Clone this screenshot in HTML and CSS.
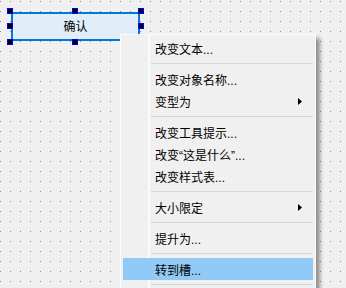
FILE: index.html
```html
<!DOCTYPE html>
<html lang="zh">
<head>
<meta charset="utf-8">
<link rel="stylesheet" href="styles.css">
</head>
<body>
<div class="canvas">
  <div class="widget">确认</div>
  <span class="handle h-tl"></span>
  <span class="handle h-tm"></span>
  <span class="handle h-tr"></span>
  <span class="handle h-ml"></span>
  <span class="handle h-mr"></span>
  <span class="handle h-bl"></span>
  <span class="handle h-bm"></span>
  <span class="handle h-br"></span>

  <div class="menu">
    <div class="item">改变文本...</div>
    <div class="sep"></div>
    <div class="item">改变对象名称...</div>
    <div class="item sub">变型为<svg class="arrow" width="4" height="7" viewBox="0 0 4 7"><path d="M0 0L4 3.5L0 7Z"/></svg></div>
    <div class="sep"></div>
    <div class="item">改变工具提示...</div>
    <div class="item">改变“这是什么”...</div>
    <div class="item">改变样式表...</div>
    <div class="sep"></div>
    <div class="item sub">大小限定<svg class="arrow" width="4" height="7" viewBox="0 0 4 7"><path d="M0 0L4 3.5L0 7Z"/></svg></div>
    <div class="sep"></div>
    <div class="item">提升为...</div>
    <div class="sep"></div>
    <div class="item active">转到槽...</div>
    <div class="sep"></div>
  </div>
</div>
</body>
</html>
```
FILE: styles.css
```css
html, body {
  margin: 0;
  padding: 0;
}
body {
  width: 346px;
  height: 288px;
  overflow: hidden;
  background-color: #f0f0f0;
  font-family: "Liberation Sans", "Noto Sans CJK SC", sans-serif;
  font-size: 12px;
  color: #000;
}
.canvas {
  position: relative;
  width: 346px;
  height: 288px;
  background-color: #f0f0f0;
  background-image: conic-gradient(from 0deg at 1px 1px, transparent 75%, #8c8c8c 0);
  background-size: 10px 10px;
  background-position: 0 1px;
}
.widget {
  position: absolute;
  left: 11px;
  top: 12px;
  width: 129px;
  height: 29px;
  box-sizing: border-box;
  border: 2px solid #0078d7;
  background: #e1eefa;
  display: flex;
  align-items: center;
  justify-content: center;
  line-height: 1;
}
.handle {
  position: absolute;
  width: 6px;
  height: 6px;
  box-sizing: border-box;
  border: 1px solid #0000f0;
  background: #000;
}
.h-tl { left: 7px; top: 8px; }
.h-tm { left: 72px; top: 8px; }
.h-tr { left: 138px; top: 8px; }
.h-ml { left: 7px; top: 23px; }
.h-mr { left: 138px; top: 23px; }
.h-bl { left: 7px; top: 39px; }
.h-bm { left: 72px; top: 39px; }
.h-br { left: 138px; top: 39px; }

.menu {
  position: absolute;
  left: 120px;
  top: 34px;
  width: 196px;
  box-sizing: border-box;
  border: 1px solid #fbfbfb;
  padding: 2px;
  background: linear-gradient(to right, #f0f0f0 27px, #fbfbfb 27px, #fbfbfb 29px, #f0f0f0 29px);
  box-shadow: 4px 4px 4px rgba(0, 0, 0, 0.4);
  display: flex;
  flex-direction: column;
}
.item {
  height: 22px;
  padding-left: 32px;
  padding-right: 11px;
  display: flex;
  align-items: center;
  justify-content: space-between;
  white-space: nowrap;
}
.item.active {
  background: #91c9f7;
}
.arrow {
  display: block;
  fill: #000;
}
.sep {
  height: 1px;
  margin: 4px 0 4px 28px;
  background: #d7d7d7;
}
```
